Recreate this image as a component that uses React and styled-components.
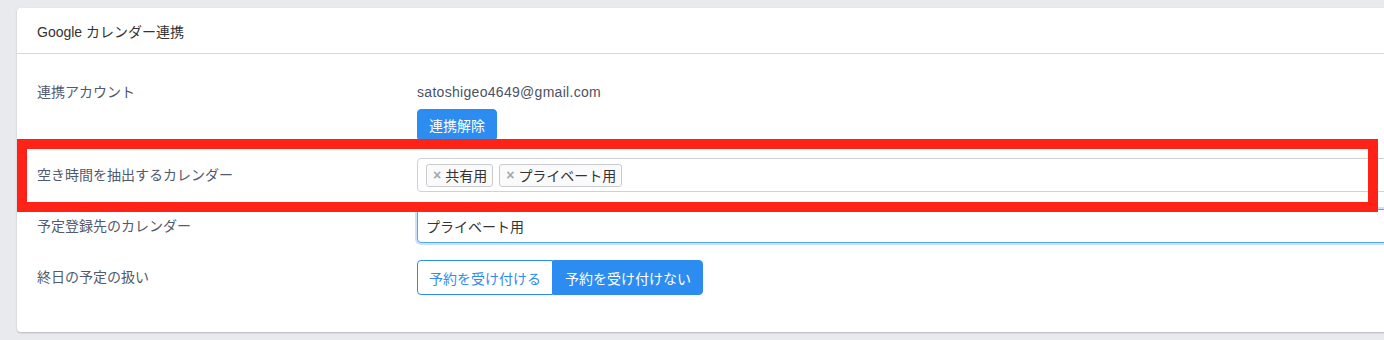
import React from 'react'
import styled, { createGlobalStyle } from 'styled-components'

const GlobalStyle = createGlobalStyle`
  html, body {
    margin: 0;
    padding: 0;
    background: #e9eaed;
    overflow: hidden;
  }
  body {
    font-family: "Liberation Sans", "Noto Sans CJK JP", sans-serif;
    font-size: 14px;
    color: #515a6e;
  }
`

const Page = styled.div`
  position: relative;
  width: 1384px;
  height: 340px;
  padding: 8px 0 0 17px;
  box-sizing: border-box;
  overflow: hidden;
`

const Card = styled.div`
  width: 1400px;
  background: #fff;
  border-radius: 4px;
  box-shadow: 0 1px 2px rgba(0, 0, 0, 0.22);
`

const CardHeader = styled.div`
  height: 45px;
  display: flex;
  align-items: center;
  padding: 0 20px;
  border-bottom: 1px solid #d7dadd;
  color: #333;
  font-size: 14px;
`

const CardBody = styled.div`
  padding: 21px 20px 20px;
`

const FormRow = styled.div`
  display: grid;
  grid-template-columns: 380px 1fr;
  margin-bottom: 17px;
`

const Label = styled.div`
  line-height: 34px;
  color: #515a6e;
`

const Value = styled.div`
  display: flex;
  flex-direction: column;
  align-items: flex-start;
`

const PlainText = styled.div`
  line-height: 34px;
  color: #4b5263;
  letter-spacing: 0.3px;
`

const PrimaryButton = styled.button`
  height: 32px;
  padding: 0 11px;
  border: 1px solid #2d8cf0;
  border-radius: 4px;
  background: #2d8cf0;
  color: #fff;
  font: inherit;
  font-size: 14px;
`

const SelectBox = styled.div`
  width: 100%;
  height: 34px;
  box-sizing: border-box;
  display: flex;
  align-items: center;
  gap: 6px;
  padding: 0 8px;
  border: 1px solid ${p => (p.$focused ? '#57a3f3' : '#cdd1d6')};
  border-radius: 4px;
  box-shadow: ${p => (p.$focused ? '0 0 0 2px rgba(45, 140, 240, 0.25)' : 'none')};
  color: #333;
  background: #fff;
`

const Tag = styled.span`
  display: inline-flex;
  align-items: center;
  height: 23px;
  box-sizing: border-box;
  padding: 0 5px 0 6px;
  border: 1px solid #c9ccd1;
  border-radius: 3px;
  background: #fafafa;
  color: #333;
  font-size: 14px;
`

const TagClose = styled.span`
  color: #a3a9b2;
  font-size: 14px;
  font-weight: 700;
  margin-right: 4px;
`

const ButtonGroup = styled.div`
  display: flex;
`

const ToggleButton = styled.button`
  height: 35px;
  padding: 0 11px;
  font: inherit;
  font-size: 14px;
  border: 1px solid #2d8cf0;
  background: ${p => (p.$active ? '#2d8cf0' : '#fff')};
  color: ${p => (p.$active ? '#fff' : '#2d8cf0')};
  &:first-child {
    border-radius: 4px 0 0 4px;
  }
  &:last-child {
    border-radius: 0 4px 4px 0;
  }
`

const Highlight = styled.div`
  position: absolute;
  left: 17px;
  top: 139px;
  width: 1361px;
  height: 73px;
  box-sizing: border-box;
  border: 10px solid #ff2317;
  pointer-events: none;
`

export default function App() {
  return (
    <Page>
      <GlobalStyle />
      <Card>
        <CardHeader>Google カレンダー連携</CardHeader>
        <CardBody>
          <FormRow>
            <Label>連携アカウント</Label>
            <Value>
              <PlainText>satoshigeo4649@gmail.com</PlainText>
              <PrimaryButton>連携解除</PrimaryButton>
            </Value>
          </FormRow>
          <FormRow>
            <Label>空き時間を抽出するカレンダー</Label>
            <Value>
              <SelectBox>
                <Tag><TagClose>×</TagClose>共有用</Tag>
                <Tag><TagClose>×</TagClose>プライベート用</Tag>
              </SelectBox>
            </Value>
          </FormRow>
          <FormRow>
            <Label>予定登録先のカレンダー</Label>
            <Value>
              <SelectBox $focused>プライベート用</SelectBox>
            </Value>
          </FormRow>
          <FormRow>
            <Label>終日の予定の扱い</Label>
            <Value>
              <ButtonGroup>
                <ToggleButton>予約を受け付ける</ToggleButton>
                <ToggleButton $active>予約を受け付けない</ToggleButton>
              </ButtonGroup>
            </Value>
          </FormRow>
        </CardBody>
      </Card>
      <Highlight />
    </Page>
  )
}
